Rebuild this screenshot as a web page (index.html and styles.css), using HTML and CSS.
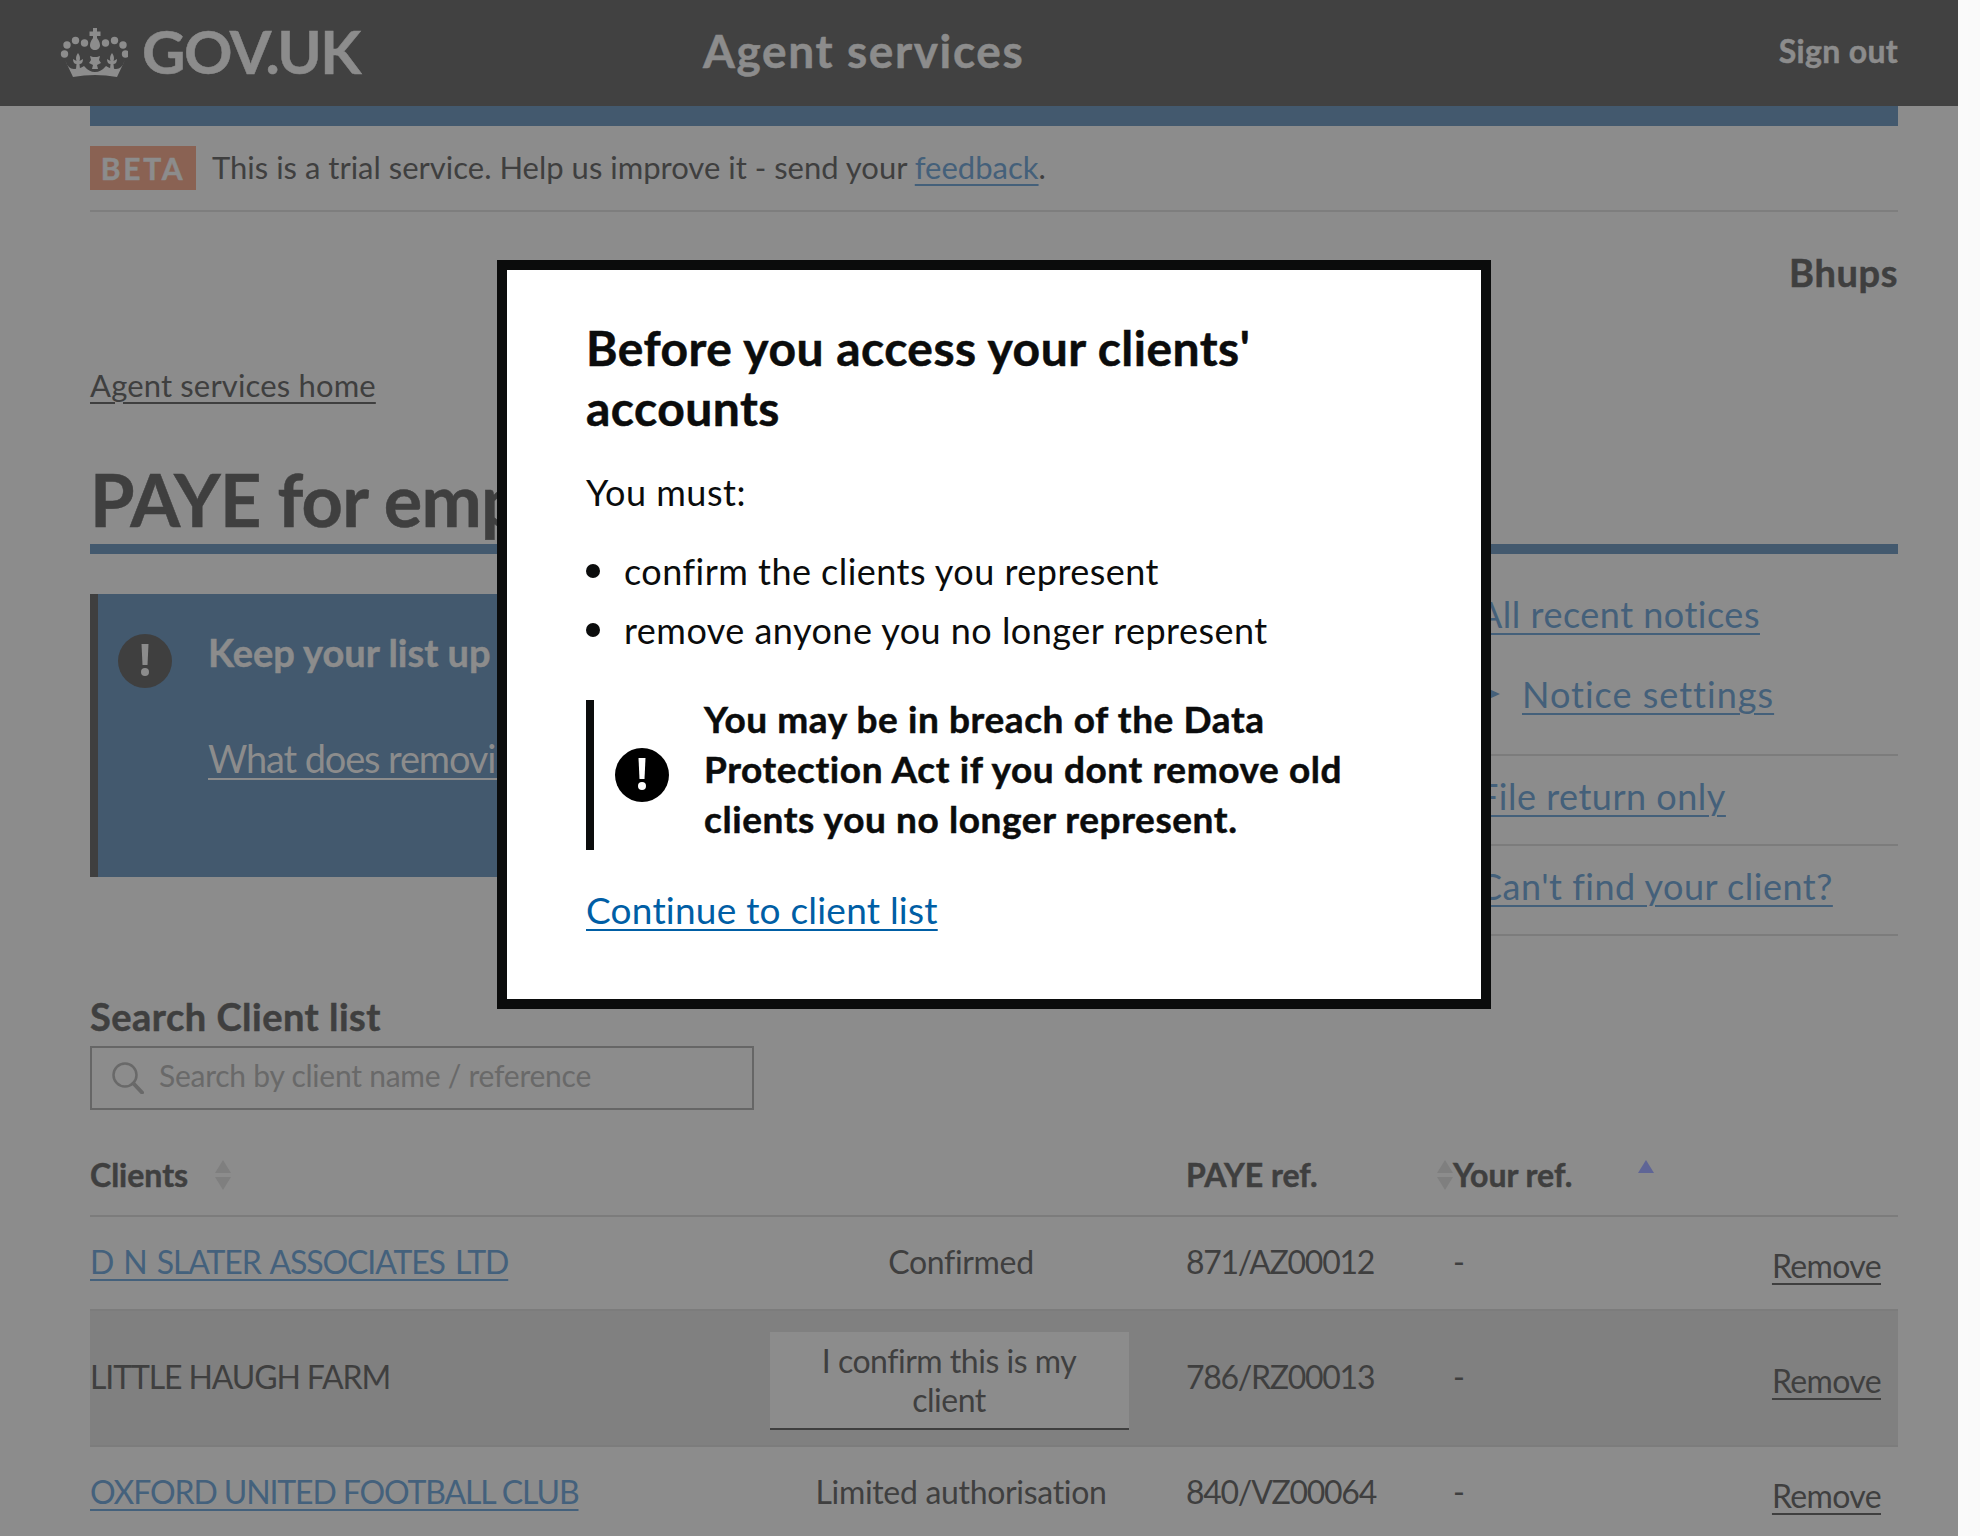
FILE: index.html
```html
<!DOCTYPE html>
<html lang="en-GB">
<head>
    <meta charset="UTF-8">
    <title>PAYE for employers - Agent services - GOV.UK</title>
    <link rel="stylesheet" href="styles.css">
</head>
<body>
    <div class="page">
        <header class="site-header">
            <svg class="crown" viewBox="10 8 68 52" aria-hidden="true">
                <circle cx="14.5" cy="37" r="3.7"/><circle cx="17" cy="28" r="3.7"/><circle cx="25.5" cy="23.5" r="3.7"/><circle cx="34.5" cy="26" r="3.7"/>
                <circle cx="55.5" cy="26" r="3.7"/><circle cx="64.5" cy="23.5" r="3.7"/><circle cx="73" cy="28" r="3.7"/><circle cx="75.5" cy="37" r="3.7"/>
                <path d="M43 11h4v3.500h3.500v4.500h-3.500v2c2.500 3 3 6 3 7.500 0 2.500-2.200 4.500-5 4.500s-5-2-5-4.500c0-1.500.500-4.500 3-7.500v-2h-3.500v-4.500h3.500z"/>
                <path d="M15 43l8 17q22-4 44 0l8-17q-3 9-9 9-6 0-10-3-5 6-11 6t-11-6q-4 3-10 3-6 0-9-9z"/>
                <path d="M40 39l3 1h4l3-1-1 4 2 3-4 2 1 4h-6l1-4-4-2 2-3z"/>
                <path d="M28 36q3 4 1.500 8l3.500-2q0 5-3.500 5l.5 5h-4l.5-5q-3.500 0-3.500-5l3.500 2q-1.500-4 1.500-8z"/>
                <path d="M62 36q3 4 1.500 8l3.500-2q0 5-3.500 5l.5 5h-4l.5-5q-3.500 0-3.500-5l3.500 2q-1.500-4 1.500-8z"/>
            </svg>
            <a class="logo-text" href="#">GOV.UK</a>
            <a class="service-name" href="#">Agent services</a>
            <a class="sign-out" href="#">Sign out</a>
        </header>

        <main class="wrap">
            <div class="phase-bar"></div>
            <div class="beta">
                <strong class="beta-tag">BETA</strong>
                <span class="beta-text">This is a trial service. Help us improve it - send your <a href="#">feedback</a>.</span>
            </div>
            <div class="account">Bhups</div>
            <a class="crumb" href="#">Agent services home</a>
            <h1 class="page-title">PAYE for employers</h1>

            <div class="columns">
                <section class="notice">
                    <svg class="alert-icon" viewBox="0 0 54 54" aria-hidden="true">
                        <circle class="alert-disc" cx="27" cy="27" r="27"/>
                        <path class="alert-mark" d="M23.500 10h7l-1 21h-5z"/>
                        <circle class="alert-mark" cx="27" cy="38" r="4"/>
                    </svg>
                    <div class="notice-body">
                        <h2>Keep your list up to date</h2>
                        <a href="#">What does removing a client do?</a>
                    </div>
                </section>

                <ul class="side-links">
                    <li>
                        <a href="#">All recent notices</a>
                        <div class="sub-link">
                            <svg class="side-arrow" viewBox="0 0 22 20" aria-hidden="true"><path d="M0 0l22 10L0 20z"/></svg>
                            <a href="#">Notice settings</a>
                        </div>
                    </li>
                    <li><a href="#">File return only</a></li>
                    <li><a href="#">Can't find your client?</a></li>
                </ul>
            </div>

            <label class="search-label" for="clientSearch">Search Client list</label>
            <div class="search">
                <svg class="search-icon" viewBox="0 0 32 32" aria-hidden="true">
                    <circle cx="13" cy="13" r="11.500"/>
                    <path d="M21.500 21.500l8.500 9"/>
                </svg>
                <input type="text" id="clientSearch" placeholder="Search by client name / reference">
            </div>

            <table class="clients">
                <colgroup>
                    <col class="col-name"><col class="col-status"><col class="col-paye"><col class="col-ref"><col class="col-action">
                </colgroup>
                <thead>
                    <tr>
                        <th><div class="th-in">Clients
                            <svg class="sort sort-clients" viewBox="0 0 16 30" aria-hidden="true"><path d="M8 0l8 13H0zM8 30L0 17h16z"/></svg>
                        </div></th>
                        <th></th>
                        <th><div class="th-in th-spread">PAYE ref.
                            <svg class="sort" viewBox="0 0 16 30" aria-hidden="true"><path d="M8 0l8 13H0zM8 30L0 17h16z"/></svg>
                        </div></th>
                        <th><div class="th-in">Your ref.
                            <svg class="sort sort-active" viewBox="0 0 16 30" aria-hidden="true"><path d="M8 0l8 13H0z"/></svg>
                        </div></th>
                        <th></th>
                    </tr>
                </thead>
                <tbody>
                    <tr>
                        <td class="name"><a class="client-link spaced" href="#">D N SLATER ASSOCIATES LTD</a></td>
                        <td class="status">Confirmed</td>
                        <td class="ref">871/AZ00012</td>
                        <td>-</td>
                        <td class="action"><a href="#">Remove</a></td>
                    </tr>
                    <tr class="row-unconfirmed">
                        <td class="name">LITTLE HAUGH FARM</td>
                        <td class="status"><button class="confirm" type="button">I confirm this is my client</button></td>
                        <td class="ref">786/RZ00013</td>
                        <td>-</td>
                        <td class="action"><a href="#">Remove</a></td>
                    </tr>
                    <tr>
                        <td class="name"><a class="client-link" href="#">OXFORD UNITED FOOTBALL CLUB</a></td>
                        <td class="status">Limited authorisation</td>
                        <td class="ref">840/VZ00064</td>
                        <td>-</td>
                        <td class="action"><a href="#">Remove</a></td>
                    </tr>
                </tbody>
            </table>
        </main>

        <div class="modal" role="dialog">
            <h2>Before you access your clients' accounts</h2>
            <p>You must:</p>
            <ul>
                <li>confirm the clients you represent</li>
                <li>remove anyone you no longer represent</li>
            </ul>
            <div class="inset">
                <svg class="alert-icon" viewBox="0 0 54 54" aria-hidden="true">
                    <circle class="modal-disc" cx="27" cy="27" r="27"/>
                    <path class="modal-mark" d="M23.500 10h7l-1 21h-5z"/>
                    <circle class="modal-mark" cx="27" cy="38" r="4"/>
                </svg>
                <strong>You may be in breach of the Data Protection Act if you dont remove old clients you no longer represent.</strong>
            </div>
            <a class="continue" href="#">Continue to client list</a>
        </div>
    </div>
</body>
</html>
```

FILE: styles.css
```css
html, body {
    margin: 0;
    padding: 0;
    height: 1536px;
    overflow: hidden;
}

body {
    font-family: Lato, "Noto Sans", sans-serif;
    background-color: #fafafa;
    color: #3f3f3f;
}

a {
    color: inherit;
    text-underline-offset: 5px;
    text-decoration-thickness: 2px;
}

/* the bold cut of Lato is lighter than the one in the design */
.site-header a, .beta-tag, .account, .page-title, .notice-body h2,
.search-label, .clients th, .modal h2, .inset strong {
    font-weight: 700;
    -webkit-text-stroke: 0.5px;
}

.page {
    position: relative;
    width: 1958px;
    height: 1536px;
    overflow: hidden;
    background-color: #8c8c8c;
}

/* header */
.site-header {
    display: flex;
    align-items: center;
    height: 106px;
    box-sizing: border-box;
    padding: 0 60px 5px;
    background-color: #414141;
    color: #8c8c8c;
}

.site-header a {
    text-decoration: none;
}

.crown {
    width: 68px;
    height: 52px;
    fill: #8c8c8c;
}

.logo-text {
    margin-left: 14px;
    font-size: 60px;
    letter-spacing: -0.025em;
}

.service-name {
    margin-left: 343px;
    font-size: 46px;
    letter-spacing: 0.035em;
}

.sign-out {
    margin-left: auto;
    font-size: 32px;
    letter-spacing: 0.01em;
}

/* page */
.wrap {
    width: 1808px;
    margin-left: 90px;
}

.phase-bar {
    height: 20px;
    background-color: #43596e;
}

.beta {
    display: flex;
    align-items: center;
    gap: 16px;
    padding: 20px 0 20px;
    border-bottom: 2px solid #7e7e7e;
}

.beta-tag {
    width: 106px;
    line-height: 44px;
    background-color: #8a6253;
    color: #8c8c8c;
    font-size: 30px;
    letter-spacing: 0.09em;
    text-align: center;
}

.beta-text {
    margin-top: -3px;
    font-size: 31px;
}

.beta-text a {
    color: #44607a;
}

.account {
    margin-top: 37px;
    text-align: right;
    font-size: 38px;
    line-height: 46px;
    letter-spacing: 0.016em;
}

.crumb {
    display: block;
    width: max-content;
    margin-top: 70px;
    font-size: 31px;
    line-height: 40px;
    letter-spacing: 0.005em;
}

.page-title {
    margin: 50px 0 0;
    padding-bottom: 1px;
    border-bottom: 10px solid #43596e;
    font-size: 72px;
    line-height: 88px;
    letter-spacing: -0.01em;
}

.columns {
    display: flex;
    justify-content: space-between;
    align-items: flex-start;
    margin-top: 40px;
}

.notice {
    display: flex;
    gap: 36px;
    width: 1350px;
    height: 283px;
    box-sizing: border-box;
    padding: 35px 0 0 20px;
    border-left: 8px solid #3f3f3f;
    background-color: #43596e;
    color: #8c8c8c;
}

.alert-icon {
    flex: none;
    width: 54px;
    height: 54px;
}

.notice .alert-icon {
    margin-top: 5px;
}

.alert-disc {
    fill: #3f3f3f;
}

.alert-mark {
    fill: #8c8c8c;
}

.notice-body h2 {
    margin: 0;
    font-size: 38px;
    line-height: 46px;
}

.notice-body a {
    display: block;
    margin-top: 60px;
    font-size: 38px;
    line-height: 46px;
    letter-spacing: -0.03em;
}

/* sidebar */
.side-links {
    width: 420px;
    margin: 0;
    padding: 0;
    list-style: none;
    color: #44607a;
    font-size: 36px;
    line-height: 40px;
    letter-spacing: 0.014em;
}

.side-links li {
    padding: 20px 0 28px;
    border-bottom: 2px solid #7c7c7c;
}

.side-links li:first-child {
    padding: 0 0 40px;
}

.sub-link {
    display: flex;
    align-items: center;
    margin-top: 40px;
    letter-spacing: 0.028em;
}

.side-arrow {
    width: 22px;
    height: 20px;
    margin-right: 22px;
    fill: #44607a;
}

/* search */
.search-label {
    display: block;
    margin-top: 58px;
    font-size: 38px;
    line-height: 44px;
    letter-spacing: 0.013em;
}

.search {
    display: flex;
    align-items: center;
    gap: 15px;
    width: 664px;
    height: 64px;
    box-sizing: border-box;
    margin-top: 8px;
    padding-left: 20px;
    border: 2px solid #666;
}

.search-icon {
    flex: none;
    width: 32px;
    height: 32px;
    fill: none;
    stroke: #696969;
    stroke-width: 2.500;
}

.search-icon path {
    stroke-width: 4;
    stroke-linecap: round;
}

.search input {
    flex: 1;
    border: 0;
    padding: 0 0 6px;
    outline: 0;
    background: none;
    font: inherit;
    font-size: 30px;
    letter-spacing: -0.008em;
}

.search input::placeholder {
    color: #696969;
    opacity: 1;
}

/* client table */
.clients {
    width: 1808px;
    margin-top: 26px;
    border-collapse: collapse;
    table-layout: fixed;
    font-size: 32px;
    letter-spacing: -0.02em;
}

.col-name { width: 644px; }
.col-status { width: 452px; }
.col-paye { width: 267px; }
.col-ref { width: 301px; }
.col-action { width: 144px; }

.clients th {
    height: 79px;
    padding: 0;
    border-bottom: 2px solid #7c7c7c;
    letter-spacing: 0;
    text-align: left;
}

.th-in {
    display: flex;
    align-items: center;
    gap: 27px;
    padding-bottom: 2px;
}

.th-spread {
    justify-content: space-between;
}

.sort {
    width: 16px;
    height: 30px;
    fill: #7f7f7f;
}

.sort-active {
    margin-left: 39px;
    fill: #5f6596;
}

.clients td {
    height: 88px;
    padding: 0 0 4px;
    border-bottom: 2px solid #7c7c7c;
}

.clients td.name {
    letter-spacing: -0.035em;
}

.clients td.ref {
    letter-spacing: -0.04em;
}

.client-link {
    color: #44617c;
}

.spaced {
    word-spacing: 3px;
}

.clients td.status {
    padding-left: 2px;
    letter-spacing: -0.01em;
    text-align: center;
}

.row-unconfirmed td {
    height: 129px;
    background-color: #808080;
}

.row-unconfirmed td.status {
    padding: 5px 0 0 2px;
}

.confirm {
    display: inline-block;
    width: 359px;
    height: 98px;
    margin-right: 24px;
    padding: 0 40px;
    border: 0;
    border-bottom: 2px solid #3f3f3f;
    background-color: #8c8c8c;
    color: #3f3f3f;
    font: inherit;
    letter-spacing: -0.015em;
    line-height: 39px;
    vertical-align: middle;
}

.clients td.action {
    height: auto;
    padding: 5px 17px 0 0;
    text-align: right;
}

/* modal */
.modal {
    position: absolute;
    left: 497px;
    top: 260px;
    width: 994px;
    height: 749px;
    box-sizing: border-box;
    padding: 48px 80px 0 79px;
    border: 10px solid #0b0c0c;
    background-color: #fff;
    color: #0b0c0c;
}

.modal h2 {
    margin: 0;
    font-size: 48px;
    line-height: 60px;
    letter-spacing: 0.01em;
}

.modal p {
    margin: 32px 0 0;
    font-size: 36px;
    line-height: 44px;
    letter-spacing: 0.014em;
}

.modal ul {
    margin: 35px 0 0;
    padding: 0;
    list-style: none;
    font-size: 36px;
    line-height: 44px;
    letter-spacing: 0.013em;
}

.modal li {
    display: flex;
    align-items: center;
    gap: 24px;
    margin-bottom: 15px;
}

.modal li::before {
    content: "";
    width: 14px;
    height: 14px;
    border-radius: 50%;
    background-color: #0b0c0c;
}

.inset {
    display: flex;
    align-items: center;
    gap: 35px;
    height: 150px;
    box-sizing: border-box;
    margin-top: 48px;
    padding-left: 21px;
    border-left: 8px solid #0b0c0c;
}

.modal-disc {
    fill: #000;
}

.modal-mark {
    fill: #fff;
}

.inset strong {
    margin-top: -12px;
    font-size: 37px;
    line-height: 50px;
    letter-spacing: 0.016em;
}

.continue {
    display: block;
    width: max-content;
    margin-top: 38px;
    color: #005ea5;
    font-size: 37px;
    line-height: 44px;
    letter-spacing: 0.006em;
}
```
